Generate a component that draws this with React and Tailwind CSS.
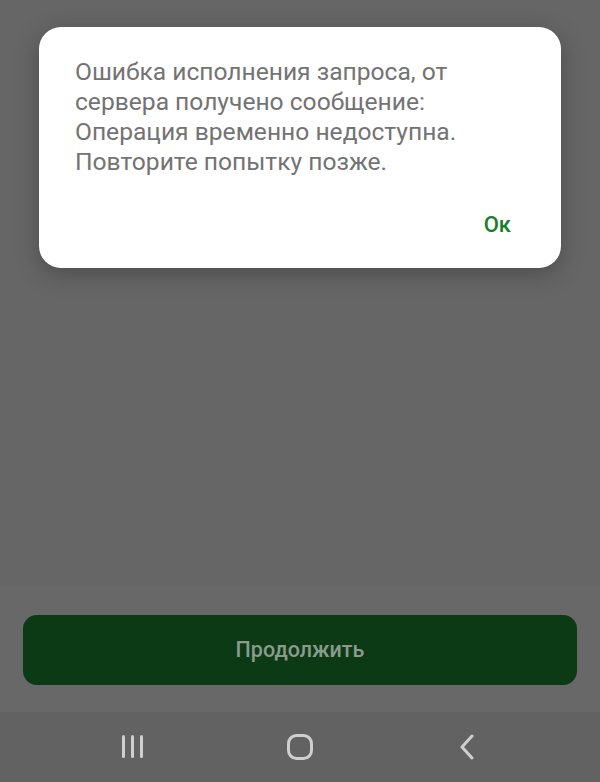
export default function App() {
  return (
    <div
      className="w-[600px] h-[782px] flex flex-col bg-[#666666] overflow-hidden"
      style={{ fontFamily: 'Roboto, "Noto Sans", sans-serif' }}
    >
      {/* Page area under the dimming */}
      <div className="flex-1 flex flex-col px-[39px] pt-[27px]">
        {/* Dialog */}
        <div className="bg-white rounded-[22px] shadow-[0_6px_24px_rgba(0,0,0,0.25)] h-[241px] flex flex-col pl-[36px] pr-[40px] pt-[30px]">
          <p className="text-[24.6px] leading-[30px] text-[#737373]">
            Ошибка исполнения запроса, от сервера получено сообщение: Операция временно недоступна. Повторите попытку позже.
          </p>
          <div className="flex justify-end mt-[37px] pr-[10px]">
            <button className="text-[22px] font-medium text-[#1a7d2b] leading-none">Ок</button>
          </div>
        </div>
      </div>

      {/* Bottom button area */}
      <div className="h-[127px] bg-[#686868] px-[23px] pt-[30px]">
        <button className="w-full h-[70px] rounded-[14px] bg-[#0b3a14] text-[21.5px] font-medium text-[#8c9a8d]">
          Продолжить
        </button>
      </div>

      {/* Android nav bar */}
      <div className="h-[70px] bg-[#626262] flex items-center px-[82px] gap-[68px]">
        <div className="w-[100px] flex justify-center">
          <svg width="24" height="26" viewBox="0 0 24 26">
            <rect x="2" y="1" width="3" height="23" rx="1.5" fill="#cfcfcf" />
            <rect x="11" y="1" width="3" height="23" rx="1.5" fill="#cfcfcf" />
            <rect x="20" y="1" width="3" height="23" rx="1.5" fill="#cfcfcf" />
          </svg>
        </div>
        <div className="w-[100px] flex justify-center">
          <svg width="28" height="28" viewBox="0 0 28 28">
            <rect x="2.5" y="2.5" width="23" height="23" rx="8" fill="none" stroke="#cfcfcf" strokeWidth="3" />
          </svg>
        </div>
        <div className="w-[100px] flex justify-center">
          <svg width="20" height="26" viewBox="0 0 20 26">
            <path d="M14 2 L4 13 L14 24" fill="none" stroke="#cfcfcf" strokeWidth="3" strokeLinecap="round" strokeLinejoin="round" />
          </svg>
        </div>
      </div>
    </div>
  );
}
